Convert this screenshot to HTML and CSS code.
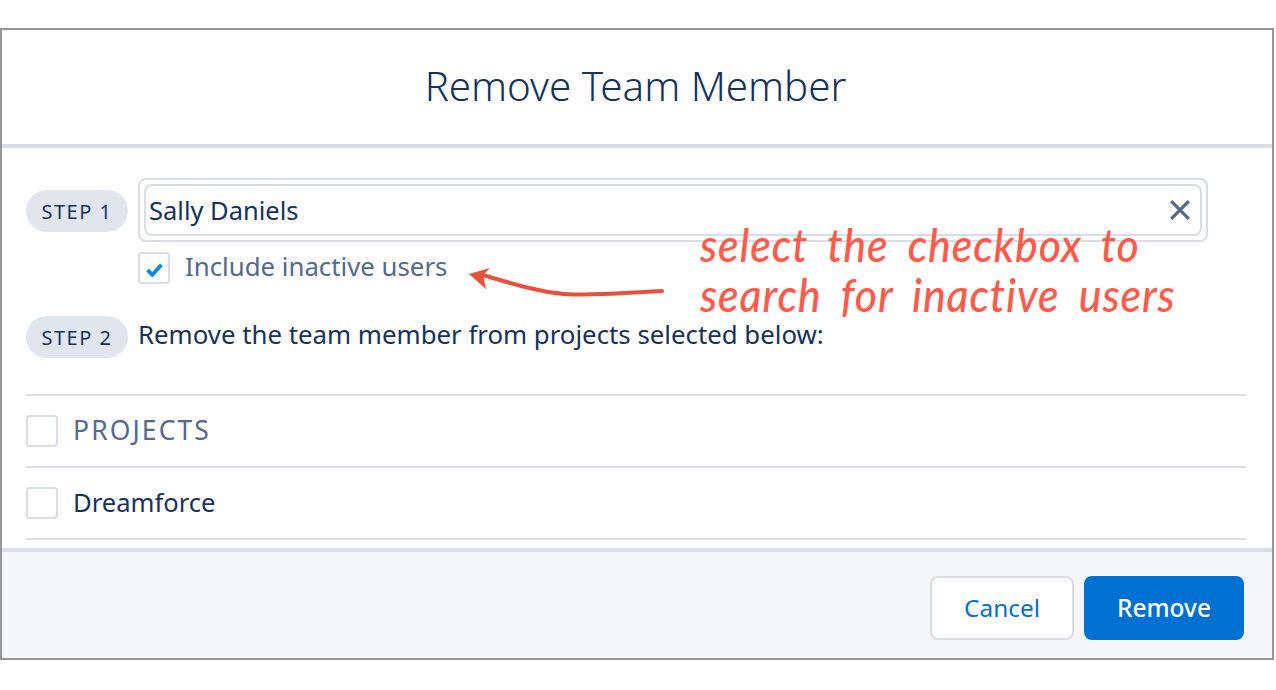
FILE: index.html
```html
<!DOCTYPE html>
<html lang="en">
<head>
<meta charset="utf-8">
<title>Remove Team Member</title>
<link rel="stylesheet" href="styles.css">
</head>
<body>
<div class="modal">
  <header class="modal-head"><h1>Remove Team Member</h1></header>
  <main class="modal-body">
    <div class="step-row">
      <span class="pill">STEP 1</span>
      <div class="search-col">
        <div class="search-outer">
          <div class="search-inner">
            <span class="search-value">Sally Daniels</span>
            <svg class="clear" viewBox="0 0 20 20"><path d="M2 2 18 18M18 2 2 18"/></svg>
          </div>
        </div>
        <div class="include">
          <span class="box"><svg class="tick" viewBox="0 0 16 14"><path d="M1.5 7.5 6 12 14.5 2.5"/></svg></span>
          <span class="include-label">Include inactive users</span>
        </div>
      </div>
    </div>
    <div class="step-two">
      <span class="pill">STEP 2</span>
      <span class="step-text">Remove the team member from projects selected below:</span>
    </div>
    <ul class="list">
      <li class="list-row"><span class="box"></span><span class="list-head">PROJECTS</span></li>
      <li class="list-row"><span class="box"></span><span class="list-item">Dreamforce</span></li>
    </ul>
  </main>
  <footer class="modal-foot">
    <button class="btn btn-cancel">Cancel</button>
    <button class="btn btn-remove">Remove</button>
  </footer>
  <svg class="arrow" viewBox="0 0 200 30">
    <path class="arrow-line" d="M193 22C150 24 125 27 95 25 70 23 45 15 10 5"/>
    <path class="arrow-head" d="M0 5 21 -1 14 6 17 20Z"/>
  </svg>
  <div class="note">select the checkbox to<br>search for inactive users</div>
</div>
</body>
</html>
```
FILE: styles.css
```css
* { box-sizing: border-box; }
html, body { margin: 0; padding: 0; background: #fff; }
body { font-family: "Noto Sans", "Liberation Sans", sans-serif; color: #16325c; }
.modal {
  position: relative;
  width: 1274px;
  height: 632px;
  margin-top: 28px;
  border: 2px solid #979797;
  display: flex;
  flex-direction: column;
  background: #fff;
}
.modal-head {
  height: 118px;
  flex: none;
  border-bottom: 4px solid #d8dde6;
  display: flex;
  align-items: center;
  justify-content: center;
}
.modal-head h1 {
  margin: 0 3px 2px 0;
  font-size: 40.3px;
  font-weight: 300;
  color: #16325c;
  line-height: 48px;
}
.modal-body {
  flex: 1;
  padding: 30px 26px 0 24px;
  min-height: 0;
}
.step-row { display: flex; align-items: flex-start; gap: 10px; }
.pill {
  flex: none;
  width: 102px;
  height: 42px;
  border-radius: 21px;
  background: #e0e5ee;
  color: #16325c;
  font-size: 20px;
  letter-spacing: 1.5px;
  display: flex;
  align-items: center;
  justify-content: center;
}
.step-row .pill { margin-top: 12px; }
.search-col { flex: none; width: 1070px; }
.search-outer {
  height: 64px;
  padding: 4px;
  border: 2px solid #d8dde6;
  border-radius: 8px;
}
.search-inner {
  height: 52px;
  border: 2px solid #d8dde6;
  border-radius: 8px;
  display: flex;
  align-items: center;
  justify-content: space-between;
  padding: 0 9px 0 3px;
}
.search-value { font-size: 25.5px; line-height: 34px; color: #16325c; }
.clear { width: 22px; height: 22px; fill: none; stroke: #54698d; stroke-width: 3; }
.include { display: flex; align-items: center; gap: 15px; margin-top: 10px; }
.box {
  flex: none;
  width: 32px;
  height: 32px;
  border: 2px solid #d8dde6;
  border-radius: 4px;
  background: #fff;
  display: flex;
  align-items: center;
  justify-content: center;
}
.tick { width: 17px; height: 15px; margin-top: 2px; fill: none; stroke: #0a84f0; stroke-width: 3.6; }
.include-label { font-size: 25.8px; line-height: 28px; margin-bottom: 4px; color: #54698d; }
.step-two { display: flex; align-items: center; gap: 10px; margin-top: 32px; }
.step-text { font-size: 25.8px; line-height: 34px; margin-bottom: 6px; color: #16325c; }
.list { list-style: none; margin: 36px 0 0; padding: 0; border-top: 2px solid #d8dde6; width: 1220px; }
.list-row {
  height: 72px;
  border-bottom: 2px solid #d8dde6;
  display: flex;
  align-items: center;
  gap: 15px;
}
.list-head { font-size: 26.5px; letter-spacing: 2.1px; margin-bottom: 2px; color: #54698d; }
.list-item { font-size: 25.6px; margin-bottom: 2px; color: #16325c; }
.modal-foot {
  flex: none;
  height: 110px;
  border-top: 4px solid #d8dde6;
  background: #f4f6f9;
  display: flex;
  justify-content: flex-end;
  align-items: flex-start;
  gap: 10px;
  padding: 24px 28px 0 0;
}
.btn {
  height: 64px;
  border-radius: 8px;
  font-family: inherit;
  font-size: 24.4px;
  padding: 0 0 2px;
}
.btn-cancel { width: 144px; background: #fff; border: 2px solid #d8dde6; color: #0070d2; }
.btn-remove { width: 160px; background: #0070d2; border: 0; color: #fff; font-weight: 500; }
.arrow { position: absolute; left: 467px; top: 239px; width: 200px; height: 30px; overflow: visible; }
.arrow-line { fill: none; stroke: #e8503c; stroke-width: 4; stroke-linecap: round; }
.arrow-head { fill: #e8503c; }
.note {
  position: absolute;
  left: 698px;
  top: 190px;
  font-family: "Lato", "Liberation Sans", sans-serif;
  font-style: italic;
  font-weight: 500;
  font-size: 46px;
  line-height: 50px;
  letter-spacing: 1px;
  word-spacing: 9px;
  color: #ff5a4a;
  white-space: nowrap;
  transform: scaleX(0.93);
  transform-origin: left top;
}
```
